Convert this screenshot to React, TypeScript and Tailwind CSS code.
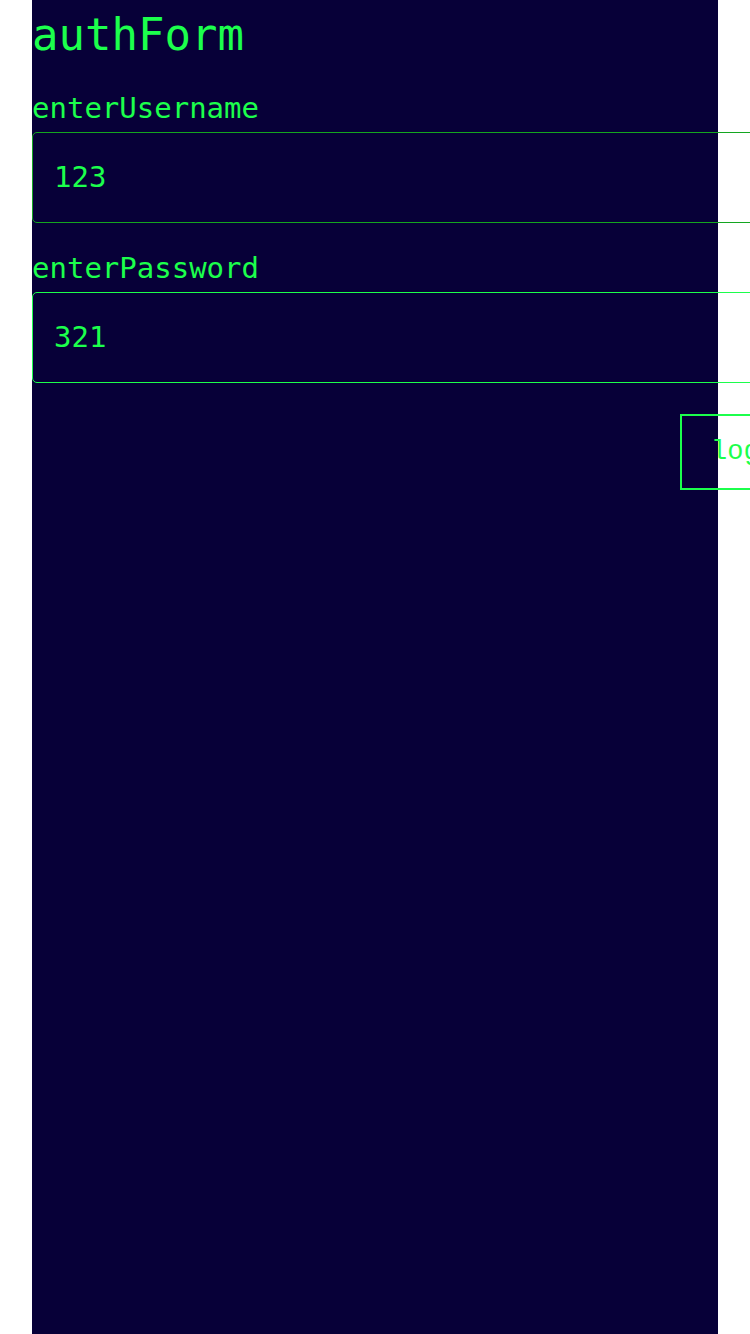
import React from "react";

export default function App() {
  const mono = "font-['DejaVu_Sans_Mono',monospace]";
  return (
    <div className="w-[750px] min-h-[1334px] overflow-hidden bg-white">
      <div className={`mx-8 min-h-[1334px] bg-[#070038] ${mono} text-[#1cff4c]`}>
        <h1 className="pt-[9px] text-[44px] leading-[51px]">authForm</h1>
        <form className="flex flex-col" onSubmit={(e) => e.preventDefault()}>
          <label className="mt-[31px] text-[29px] leading-[34px]">enterUsername</label>
          <div className="mt-[7px] flex h-[91px] w-[730px] shrink-0 items-center rounded-[5px] border-[1.5px] border-[#14a620] pl-[21px] text-[29px]">
            123
          </div>
          <label className="mt-[28px] text-[29px] leading-[34px]">enterPassword</label>
          <div className="mt-[7px] flex h-[91px] w-[730px] shrink-0 items-center rounded-[5px] border-[1.5px] border-[#1cff4c] pl-[21px] text-[29px]">
            321
          </div>
          <div className="mt-[31px] flex">
            <button
              type="submit"
              className="ml-[648px] flex h-[76px] shrink-0 items-center border-2 border-[#1cff4c] bg-transparent pl-[29px] pr-[20px] font-['Liberation_Mono',monospace] text-[27px] text-[#1cff4c]"
            >
              login
            </button>
          </div>
        </form>
      </div>
    </div>
  );
}
